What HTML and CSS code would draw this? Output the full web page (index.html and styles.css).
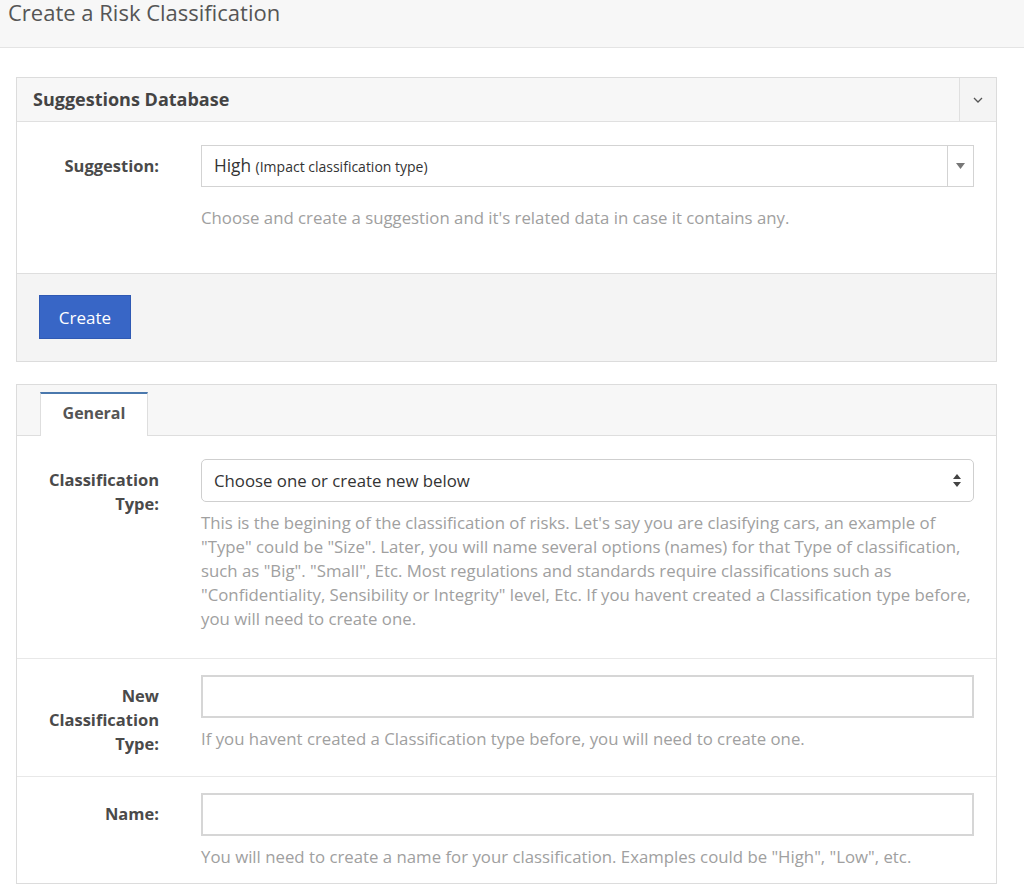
FILE: index.html
```html
<!DOCTYPE html>
<html>
<head>
<meta charset="utf-8">
<link rel="stylesheet" href="styles.css">
</head>
<body>
<header class="page-header">
  <h1>Create a Risk Classification</h1>
</header>
<main class="content">
  <section class="panel">
    <div class="panel-head">
      <h2>Suggestions Database</h2>
      <button class="collapse-btn" aria-label="collapse">
        <svg width="10" height="6" viewBox="0 0 10 6"><path d="M1 1 L5 5 L9 1" fill="none" stroke="#555" stroke-width="1.3"/></svg>
      </button>
    </div>
    <div class="panel-body">
      <div class="row row-first">
        <label class="lbl">Suggestion:</label>
        <div class="field">
          <div class="combo">
            <span class="combo-text">High <small>(Impact classification type)</small></span>
            <span class="combo-arrow"><svg width="9" height="6" viewBox="0 0 9 6"><path d="M0 0 H9 L4.5 6 Z" fill="#777"/></svg></span>
          </div>
          <p class="help help-wide">Choose and create a suggestion and it's related data in case it contains any.</p>
        </div>
      </div>
    </div>
    <div class="panel-foot">
      <button class="btn-primary">Create</button>
    </div>
  </section>

  <section class="panel panel-tabs">
    <div class="tabs">
      <div class="tab active">General</div>
    </div>
    <div class="tab-body">
      <div class="row row-first">
        <label class="lbl">Classification Type:</label>
        <div class="field">
          <div class="select">
            <span>Choose one or create new below</span>
            <svg width="8" height="13" viewBox="0 0 8 13"><path d="M0 5 L4 0 L8 5 Z M0 8 L4 13 L8 8 Z" fill="#444"/></svg>
          </div>
          <p class="help">This is the begining of the classification of risks. Let's say you are clasifying cars, an example of "Type" could be "Size". Later, you will name several options (names) for that Type of classification, such as "Big". "Small", Etc. Most regulations and standards require classifications such as "Confidentiality, Sensibility or Integrity" level, Etc. If you havent created a Classification type before, you will need to create one.</p>
        </div>
      </div>
      <div class="row">
        <label class="lbl">New Classification Type:</label>
        <div class="field">
          <div class="input"></div>
          <p class="help">If you havent created a Classification type before, you will need to create one.</p>
        </div>
      </div>
      <div class="row">
        <label class="lbl">Name:</label>
        <div class="field">
          <div class="input"></div>
          <p class="help">You will need to create a name for your classification. Examples could be "High", "Low", etc.</p>
        </div>
      </div>
    </div>
  </section>
</main>
</body>
</html>
```

FILE: styles.css
```css
* { box-sizing: border-box; }

body {
  margin: 0;
  font-family: "Open Sans", "Noto Sans", sans-serif;
  color: #333;
  background: #fff;
}

.page-header {
  height: 48px;
  background: #f7f7f7;
  border-bottom: 1px solid #e4e4e4;
  padding-left: 8px;
}

.page-header h1 {
  margin: 0;
  font-size: 22px;
  font-weight: 400;
  line-height: 25px;
  color: #555;
}

.content {
  padding: 29px 27px 0 16px;
}

.panel {
  border: 1px solid #dcdcdc;
  margin-bottom: 22px;
}

.panel-head {
  display: flex;
  align-items: stretch;
  height: 44px;
  background: #f7f7f7;
  border-bottom: 1px solid #e0e0e0;
}

.panel-head h2 {
  flex: 1;
  margin: 0;
  padding-left: 16px;
  font-size: 18px;
  font-weight: 700;
  line-height: 42px;
  color: #444;
}

.collapse-btn {
  width: 37px;
  border: 0;
  border-left: 1px solid #e0e0e0;
  background: #f4f4f4;
  display: flex;
  align-items: center;
  justify-content: center;
  padding: 0;
}

.panel-body {
  padding: 0 22px 43px 0;
}

.row {
  display: grid;
  grid-template-columns: 142px 1fr;
  column-gap: 42px;
  padding: 16px 22px 20px 0;
  border-top: 1px solid #e8e8e8;
}

.tab-body .row:last-child { padding-bottom: 14px; }

.panel-body .row { padding: 23px 0 0 0; border-top: 0; }
.tab-body .row-first { padding-top: 23px; padding-bottom: 27px; border-top: 0; }

.lbl {
  text-align: right;
  font-size: 16.5px;
  font-weight: 700;
  color: #4a4a4a;
  line-height: 24px;
  padding-top: 9px;
}

.combo {
  display: flex;
  height: 42px;
  border: 1px solid #d3d3d3;
  background: #fff;
}

.combo-text {
  flex: 1;
  padding-left: 12px;
  font-size: 17.3px;
  line-height: 40px;
  color: #333;
}

.combo-text small {
  font-size: 14px;
}

.combo-arrow {
  width: 26px;
  border-left: 1px solid #d3d3d3;
  display: flex;
  align-items: center;
  justify-content: center;
}

.help {
  margin: 9px 0 0;
  font-size: 16.8px;
  line-height: 24px;
  color: #a0a0a0;
}

.help-wide { margin-top: 19px; }

.panel-foot {
  background: #f4f4f4;
  border-top: 1px solid #dedede;
  padding: 21px 22px 22px;
}

.btn-primary {
  display: block;
  width: 92px;
  height: 44px;
  background: #3866c6;
  border: 1px solid #2f59b3;
  color: #fff;
  font-family: "Open Sans", "Noto Sans", sans-serif;
  font-size: 17px;
  padding: 0;
}

.tabs {
  height: 51px;
  background: #f7f7f7;
  border-bottom: 1px solid #dedede;
  padding: 7px 0 0 23px;
  display: flex;
  align-items: flex-end;
}

.tab {
  width: 108px;
  height: 44px;
  margin-bottom: -1px;
  background: #fff;
  border: 1px solid #dedede;
  border-top: 2px solid #4a78ad;
  border-bottom: 0;
  text-align: center;
  font-size: 16px;
  font-weight: 700;
  color: #555;
  line-height: 38px;
}

.select {
  height: 43px;
  border: 1px solid #cfcfcf;
  border-radius: 5px;
  display: flex;
  align-items: center;
  justify-content: space-between;
  padding: 0 12px 0 12px;
  font-size: 16.8px;
  color: #333;
}

.input {
  height: 43px;
  border: 2px solid #d6d6d6;
  background: #fff;
}
```
